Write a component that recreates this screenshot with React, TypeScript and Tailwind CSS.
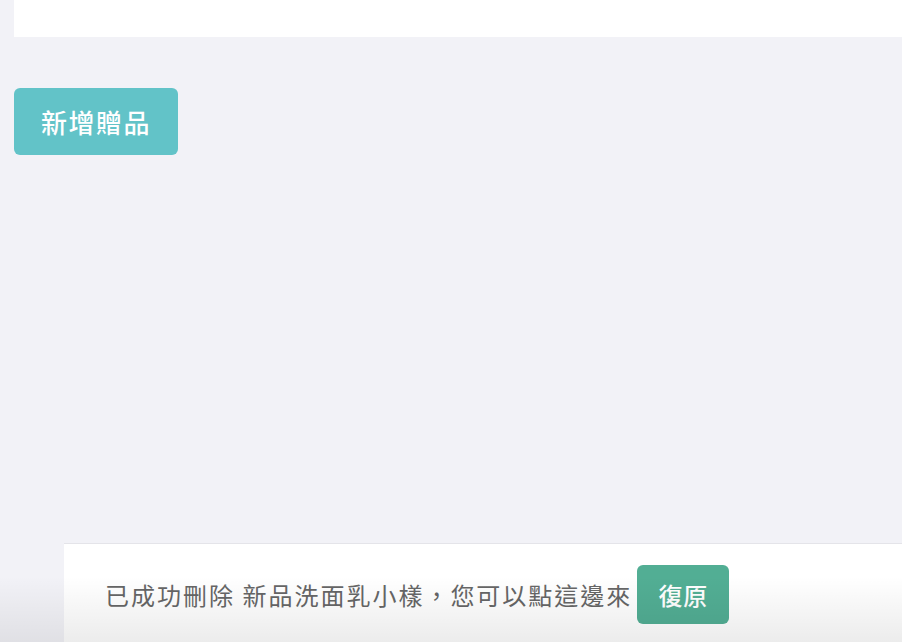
export default function App() {
  return (
    <div className="relative min-h-screen h-[642px] overflow-hidden bg-[#f2f2f7] font-['Noto_Sans_CJK_TC','Noto_Sans',sans-serif]">
      {/* top card, scrolled mostly out of view */}
      <div className="ml-[14px] h-[37px] bg-white" />

      <div className="pl-[14px] pt-[51px]">
        <button className="h-[67px] w-[164px] rounded-[6px] bg-[#62c3c8] text-[26px] font-medium tracking-[1.5px] text-white">
          新增贈品
        </button>
      </div>

      {/* undo toast */}
      <div className="absolute left-[64px] right-0 top-[543px] flex h-[110px] items-start border-t border-[#e4e4e9] bg-white pl-[41px] pt-[21px]">
        <div className="flex h-[59px] items-center">
          <span className="text-[24px] tracking-[2px] text-[#666666]">
            已成功刪除 新品洗面乳小樣，您可以點這邊來
          </span>
          <button className="ml-[5px] h-[59px] w-[92px] rounded-[6px] bg-[#52ae94] text-[24px] font-medium tracking-[1px] text-white">
            復原
          </button>
        </div>
      </div>

      {/* bottom shade */}
      <div className="pointer-events-none absolute bottom-0 left-0 right-0 h-[66px] bg-linear-to-b from-transparent to-black/[0.075]" />
    </div>
  );
}
